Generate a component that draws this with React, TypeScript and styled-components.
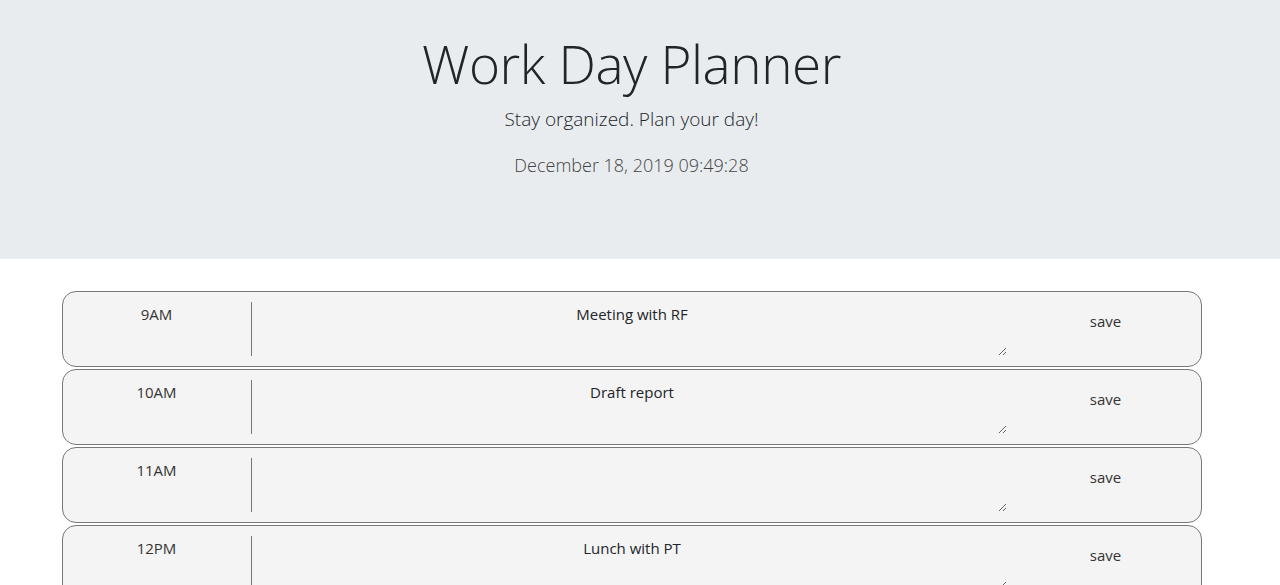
import React from "react";
import styled, { createGlobalStyle } from "styled-components";

const Global = createGlobalStyle`
  html { overflow: hidden; }
  html, body { margin: 0; padding: 0; background: #fff; }
  body {
    font-family: "Open Sans", "Segoe UI", Arial, sans-serif;
    color: #212529;
    font-size: 15px;
  }
  * { box-sizing: border-box; }
`;

const Jumbotron = styled.header`
  background: #e9ecef;
  height: 259px;
  margin-bottom: 32px;
  display: flex;
  flex-direction: column;
  align-items: center;
  padding: 25px 17px 0 0;
`;

const Title = styled.h1`
  margin: 0;
  font-weight: 300;
  font-size: 53px;
  line-height: 78px;
  letter-spacing: -0.4px;
  color: #212529;
`;

const Lead = styled.p`
  margin: 2px 0 0;
  font-weight: 300;
  font-size: 19px;
  line-height: 28px;
  color: #212529;
`;

const DateLine = styled.p`
  margin: 18px 0 0;
  font-weight: 300;
  font-size: 18px;
  line-height: 28px;
  color: #444;
`;

const Page = styled.main`
  padding-right: 17px;
`;

const Container = styled.div`
  width: 1140px;
  margin: 0 auto;
  display: flex;
  flex-direction: column;
  gap: 2px;
`;

const Row = styled.div`
  display: grid;
  grid-template-columns: 188px 760px 1fr;
  height: 76px;
  flex-shrink: 0;
  border: 1px solid #777;
  border-radius: 14px;
  background: #f4f4f4;
`;

const Hour = styled.div`
  text-align: center;
  padding-top: 12px;
  font-size: 15px;
  line-height: 20px;
  color: #333;
`;

const Note = styled.textarea`
  margin-top: 10px;
  width: 756px;
  height: 54px;
  border: none;
  border-left: 1px solid #777;
  background: transparent;
  resize: vertical;
  text-align: center;
  font-family: "Open Sans", "Segoe UI", Arial, sans-serif;
  font-size: 15px;
  line-height: 20px;
  color: #212529;
  padding: 2px 0 0 6px;
  outline: none;
`;

const SaveButton = styled.button`
  border: none;
  background: transparent;
  font-family: "Open Sans", "Segoe UI", Arial, sans-serif;
  font-size: 15px;
  color: #333;
  padding: 0;
  margin-top: 19px;
  align-self: start;
  justify-self: center;
  line-height: 20px;
`;

const hours = [
  { label: "9AM", text: "Meeting with RF" },
  { label: "10AM", text: "Draft report" },
  { label: "11AM", text: "" },
  { label: "12PM", text: "Lunch with PT" },
];

export default function App() {
  return (
    <>
      <Global />
      <Jumbotron>
        <Title>Work Day Planner</Title>
        <Lead>Stay organized. Plan your day!</Lead>
        <DateLine>December 18, 2019 09:49:28</DateLine>
      </Jumbotron>
      <Page>
        <Container>
          {hours.map((h) => (
            <Row key={h.label}>
              <Hour>{h.label}</Hour>
              <Note defaultValue={h.text} />
              <SaveButton>save</SaveButton>
            </Row>
          ))}
        </Container>
      </Page>
    </>
  );
}
